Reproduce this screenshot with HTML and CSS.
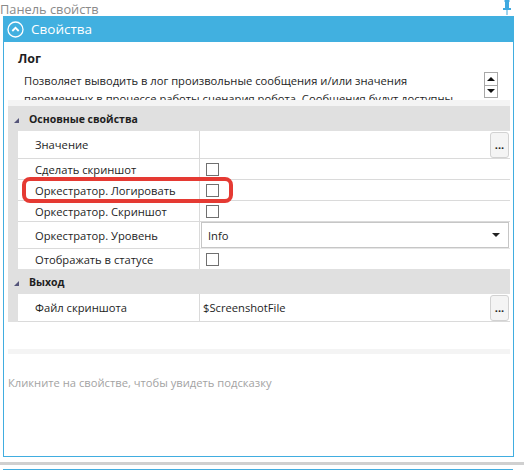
FILE: index.html
```html
<!DOCTYPE html>
<html lang="ru">
<head>
  <meta charset="UTF-8">
  <title>Панель свойств</title>
  <link rel="stylesheet" href="styles.css">
</head>
<body>

  <div class="titlebar">
    <span>Панель свойств</span>
    <svg class="pin" width="8" height="15" viewBox="0 0 8 15">
      <rect x="1.5" y="0" width="5" height="2" fill="#3fa9e0"/>
      <rect x="2" y="2" width="4" height="6" fill="#3fa9e0"/>
      <rect x="0" y="8" width="8" height="2" fill="#3fa9e0"/>
      <rect x="3.5" y="10" width="1" height="5" fill="#3fa9e0"/>
    </svg>
  </div>

  <div class="panel">
    <div class="panel-head">
      <svg class="collapse" width="17" height="17" viewBox="0 0 17 17">
        <circle cx="8.5" cy="8.5" r="7.5" fill="none" stroke="#fff" stroke-width="1.3"/>
        <path d="M5.3 10 L8.5 6.8 L11.7 10" fill="none" stroke="#fff" stroke-width="1.8"/>
      </svg>
      <span>Свойства</span>
    </div>

    <div class="info">
      <div class="info-title">Лог</div>
      <div class="info-body">
        <p>Позволяет выводить в лог произвольные сообщения и/или значения переменных в процессе работы сценария робота. Сообщения будут доступны</p>
        <div class="spin">
          <span class="up"></span>
          <span class="down"></span>
        </div>
      </div>
    </div>

    <div class="grid">
      <div class="grid-band"></div>

      <div class="category"><i class="expander"></i>Основные свойства</div>
      <div class="prop tall">
        <div class="name">Значение</div>
        <div class="value"><button class="dots">...</button></div>
      </div>
      <div class="prop">
        <div class="name">Сделать скриншот</div>
        <div class="value"><span class="check"></span></div>
      </div>
      <div class="prop marked">
        <div class="name">Оркестратор. Логировать</div>
        <div class="value"><span class="check"></span></div>
      </div>
      <div class="prop">
        <div class="name">Оркестратор. Скриншот</div>
        <div class="value"><span class="check"></span></div>
      </div>
      <div class="prop combo-row">
        <div class="name">Оркестратор. Уровень</div>
        <div class="value"><div class="combo">Info<i class="caret"></i></div></div>
      </div>
      <div class="prop last">
        <div class="name">Отображать в статусе</div>
        <div class="value"><span class="check"></span></div>
      </div>

      <div class="category"><i class="expander"></i>Выход</div>
      <div class="prop tall">
        <div class="name">Файл скриншота</div>
        <div class="value text">$ScreenshotFile<button class="dots">...</button></div>
      </div>
    </div>

    <div class="grid-band bottom"></div>
    <div class="hint">Кликните на свойстве, чтобы увидеть подсказку</div>
  </div>

  <div class="splitter"></div>
  <div class="next-panel"></div>

</body>
</html>
```

FILE: styles.css
```css
body {
  margin: 0;
  background: #fff;
  font-family: "Open Sans", "Noto Sans", sans-serif;
  font-size: 11.2px;
  color: #1e1e1e;
  width: 524px;
  height: 470px;
  overflow: hidden;
}

.titlebar {
  height: 16px;
  display: flex;
  justify-content: space-between;
  align-items: flex-start;
  color: #8a8a8a;
  font-size: 12.8px;
  line-height: 18px;
  padding-right: 13px;
}

.pin {
  margin-top: 0;
}

.panel {
  margin-left: 3px;
  width: 509px;
  height: 440px;
  border: 1px solid #41ade0;
  border-top: none;
}

.panel-head {
  height: 26px;
  margin: 0 -1px;
  background: #41b0e0;
  color: #fff;
  display: flex;
  align-items: center;
  font-size: 13.5px;
}

.collapse {
  margin: 0 7px 0 4px;
}

.info {
  height: 58px;
  overflow: hidden;
}

.info-title {
  font-weight: bold;
  font-size: 12.5px;
  padding: 9px 0 0 14px;
  line-height: 16px;
}

.info-body {
  display: flex;
  padding: 5px 0 0 20px;
}

.info-body p {
  margin: 0;
  width: 440px;
  line-height: 18px;
}

.spin {
  margin-left: 20px;
  width: 12px;
  height: 24px;
  border: 1px solid #a8a8a8;
  display: flex;
  flex-direction: column;
}

.spin span {
  flex: 1;
  display: flex;
  align-items: center;
  justify-content: center;
}

.spin .up {
  border-bottom: 1px solid #a8a8a8;
}

.spin .up::after {
  content: "";
  border: 4px solid transparent;
  border-bottom: 4px solid #111;
  border-top: 0;
}

.spin .down::after {
  content: "";
  border: 4px solid transparent;
  border-top: 4px solid #111;
  border-bottom: 0;
}

.grid {
  margin: 0 3px 0 4px;
  background: #fff;
}

.grid-band {
  height: 6px;
  background: #f4f4f4;
}

.category {
  height: 25px;
  background: #e0e0e0;
  display: flex;
  align-items: center;
  font-weight: bold;
  font-size: 10.5px;
}

.expander {
  width: 0;
  height: 0;
  margin: 4px 10px 0 6px;
  border-left: 5px solid transparent;
  border-bottom: 5px solid #55557a;
}

.prop {
  height: 21px;
  display: flex;
  border-left: 10px solid #e0e0e0;
}

.prop.tall {
  height: 28px;
}

.prop.combo-row {
  height: 27px;
}

.prop.last {
  height: 20px;
}

.prop .name {
  width: 182px;
  padding-left: 17px;
  border-right: 1px solid #dadada;
  border-bottom: 1px solid #dadada;
  display: flex;
  align-items: center;
  flex-shrink: 0;
  box-sizing: border-box;
}

.prop .value {
  flex: 1;
  border-bottom: 1px solid #dadada;
  display: flex;
  align-items: center;
  padding-left: 6px;
}

.prop.last .name,
.prop.last .value {
  border-bottom: none;
}

.prop .value.text {
  padding-left: 3px;
}

.check {
  width: 11px;
  height: 11px;
  border: 1px solid #707070;
  background: #fff;
}

.dots {
  margin-left: auto;
  margin-right: 1px;
  width: 19px;
  height: 26px;
  background: #f4f4f4;
  border: 1px solid #d2d2d2;
  border-radius: 3px;
  padding: 0;
  font-family: inherit;
  font-size: 11px;
  font-weight: bold;
  color: #222;
  line-height: 20px;
}

.combo-row .value {
  padding-left: 1px;
  align-items: stretch;
  border-bottom-color: #e6e6e6;
}

.combo {
  flex: 1;
  margin-right: 1px;
  border: 1px solid #c6c6c6;
  display: flex;
  align-items: center;
  padding-left: 6px;
}

.caret {
  margin-left: auto;
  margin-right: 8px;
  border: 4px solid transparent;
  border-top: 4px solid #222;
  border-bottom: 0;
}

/* red frame around the orchestrator logging row */
.marked {
  position: relative;
}

.marked::before {
  content: "";
  position: absolute;
  left: 4px;
  top: -3px;
  width: 203px;
  height: 18px;
  border: 4px solid #e53a33;
  border-radius: 8px;
  pointer-events: none;
}

.grid-band.bottom {
  margin: 27px 3px 0 4px;
  height: 5px;
}

.hint {
  color: #a3a3a3;
  padding: 21px 0 0 4px;
}

.splitter {
  margin-top: 5px;
  height: 3px;
  background: #d0d0d0;
}

.next-panel {
  margin: 4px 0 0 3px;
  width: 510px;
  height: 10px;
  border-top: 1px solid #41ade0;
}
```
